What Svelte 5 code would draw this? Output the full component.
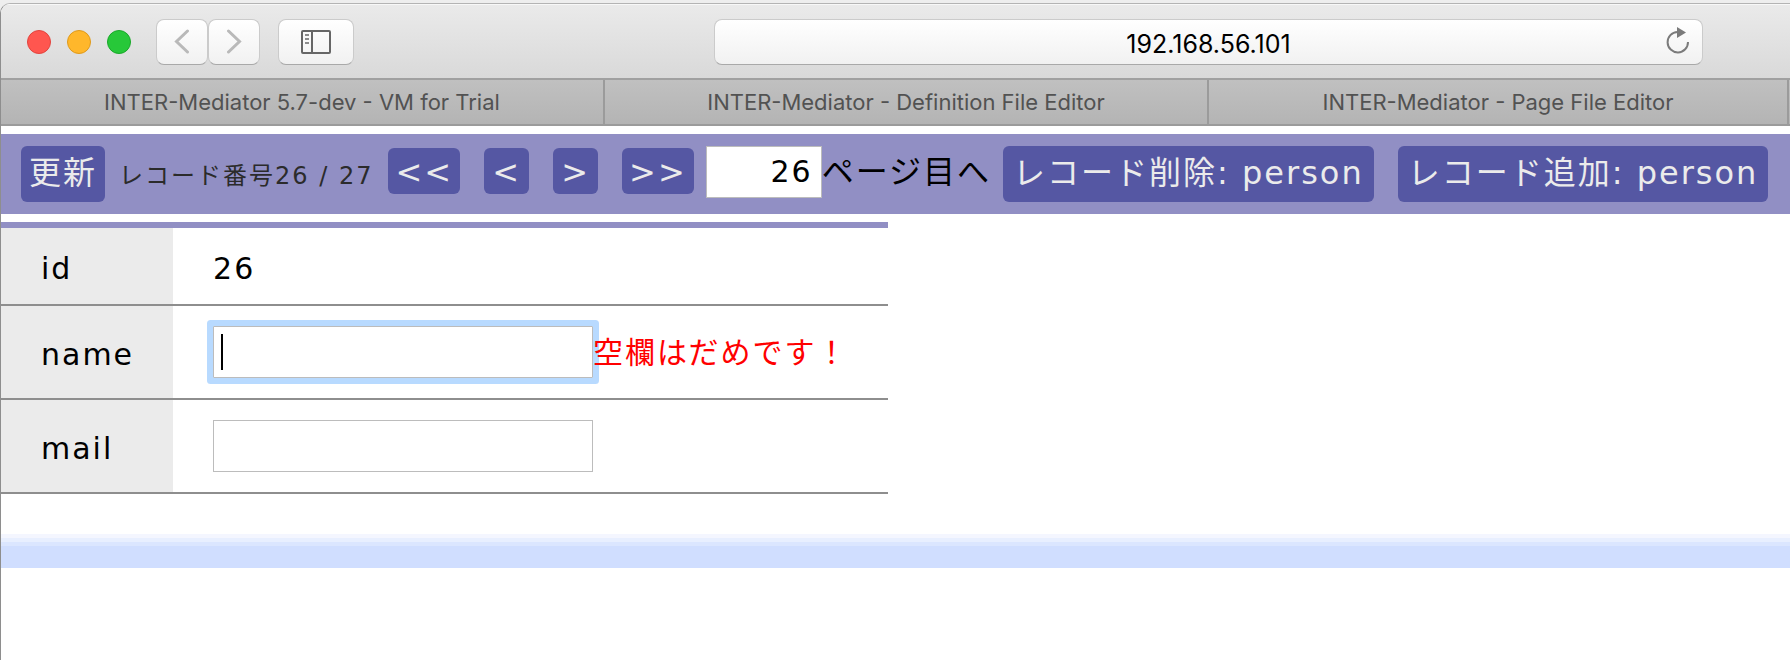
<script>
  const tabs = [
    'INTER-Mediator 5.7-dev - VM for Trial',
    'INTER-Mediator - Definition File Editor',
    'INTER-Mediator - Page File Editor'
  ];
  let page = $state('26');
  let name = $state('');
  let mail = $state('');
</script>

<div class="window">
  <header class="toolbar">
    <div class="lights">
      <span class="light red"></span>
      <span class="light amber"></span>
      <span class="light green"></span>
    </div>
    <div class="history">
      <button class="tool nav" aria-label="Back">
        <svg width="16" height="26" viewBox="0 0 16 26"><path d="M13.5 2 2.500 12.500 13.500 23" /></svg>
      </button>
      <button class="tool nav" aria-label="Forward">
        <svg width="16" height="26" viewBox="0 0 16 26"><path d="M2.500 2 13.500 12.500 2.500 23" /></svg>
      </button>
    </div>
    <button class="tool side" aria-label="Sidebar">
      <svg width="30" height="24" viewBox="0 0 30 24">
        <rect x="1" y="1" width="28" height="22" rx="1" fill="none" stroke="#666" stroke-width="2" />
        <path d="M11 1v22" stroke="#666" stroke-width="2" />
        <path d="M4 5h4M4 9h4M4 13h4" stroke="#8c8c8c" stroke-width="2" />
      </svg>
    </button>
    <div class="address">
      <span>192.168.56.101</span>
      <button class="reload" aria-label="Reload">
        <svg width="24" height="28" viewBox="0 0 24 28">
          <path d="M22 15A10.200 10.200 0 1 1 11.500 5" fill="none" stroke="#7b7b7b" stroke-width="2" />
          <path d="M11 0v11l9-5.500z" fill="#7b7b7b" />
        </svg>
      </button>
    </div>
  </header>

  <nav class="tabs">
    {#each tabs as tab}
      <a href="#top">{tab}</a>
    {/each}
  </nav>

  <main>
    <div class="navigator">
      <button class="action refresh">更新</button>
      <span class="count">レコード番号26 / 27</span>
      <div class="pager">
        <button class="action step">&lt;&lt;</button>
        <button class="action step">&lt;</button>
        <button class="action step">&gt;</button>
        <button class="action step">&gt;&gt;</button>
      </div>
      <label class="jump"><input bind:value={page} />ページ目へ</label>
      <div class="records">
        <button class="action">レコード削除: person</button>
        <button class="action">レコード追加: person</button>
      </div>
    </div>

    <table>
      <tbody>
        <tr class="short">
          <th scope="row">id</th>
          <td>26</td>
        </tr>
        <tr>
          <th scope="row"><label for="name">name</label></th>
          <td>
            <div class="field">
              <input id="name" class="focused" bind:value={name} />
              <span class="caret"></span>
              <span class="error">空欄はだめです！</span>
            </div>
          </td>
        </tr>
        <tr>
          <th scope="row"><label for="mail">mail</label></th>
          <td><div class="field"><input id="mail" bind:value={mail} /></div></td>
        </tr>
      </tbody>
    </table>

    <div class="band"></div>
  </main>
</div>

<style>
  :global(body) {
    background: #eee;
  }
  * {
    box-sizing: border-box;
  }
  button,
  input {
    font: inherit;
    letter-spacing: inherit;
    margin: 0;
  }
  .window {
    margin-top: 3px;
    min-height: calc(100vh - 3px);
    border-left: 1px solid #8e8e8e;
    border-top: 1px solid #b4b4b4;
    border-top-left-radius: 10px;
    background: #fff;
    overflow: hidden;
  }
  .toolbar {
    display: flex;
    align-items: center;
    height: 76px;
    padding: 1px 87px 0 26px;
    border-top: 1px solid #f8f8f8;
    border-bottom: 2px solid #a0a0a0;
    background: linear-gradient(#eaeaea, #d9d9d9);
  }
  .lights {
    display: flex;
    gap: 16px;
    margin-right: 25px;
  }
  .light {
    width: 24px;
    height: 24px;
    border-radius: 50%;
    border: 1px solid;
  }
  .red {
    background: #ff564f;
    border-color: #e2443e;
  }
  .amber {
    background: #ffb72b;
    border-color: #df9a1c;
  }
  .green {
    background: #27c839;
    border-color: #1aa82a;
  }
  .history {
    display: flex;
    margin-right: 18px;
  }
  .tool,
  .address {
    height: 46px;
    border: 1px solid #cbcbcb;
    border-bottom-color: #a9a9a9;
    border-radius: 8px;
    background: linear-gradient(#fff, #f1f1f1);
  }
  .tool {
    display: flex;
    align-items: center;
    justify-content: center;
    padding: 0;
  }
  .nav {
    width: 52px;
  }
  .nav path {
    fill: none;
    stroke: #b9b9b9;
    stroke-width: 3;
    stroke-linecap: round;
  }
  .side {
    width: 76px;
  }
  .address {
    position: relative;
    flex: 1;
    margin-left: 360px;
    padding-top: 3px;
    display: flex;
    align-items: center;
    justify-content: center;
    font: 25px/30px Inter, sans-serif;
    color: #000;
  }
  .reload {
    position: absolute;
    right: 12px;
    top: 7px;
    padding: 0;
    border: 0;
    background: none;
    line-height: 0;
  }
  .tabs {
    display: grid;
    grid-template-columns: 604fr 604fr 580fr;
    padding-right: 1px;
    height: 46px;
    border-bottom: 2px solid #9b9b9b;
    background: linear-gradient(#c0c0c0, #b4b4b4);
  }
  .tabs a {
    border-right: 2px solid #9b9b9b;
    text-align: center;
    text-decoration: none;
    color: #525252;
    font: 22px/44px Inter, sans-serif;
    white-space: nowrap;
  }
  main {
    padding-top: 8px;
    font-family: 'DejaVu Sans', 'Noto Sans CJK JP', sans-serif;
    font-size: 30px;
    letter-spacing: 2px;
    color: #000;
  }
  .navigator {
    display: flex;
    align-items: flex-start;
    height: 80px;
    padding: 12px 20px;
    background: #918fc4;
    white-space: nowrap;
  }
  .action {
    height: 56px;
    padding: 0 10px 2px;
    border: 0;
    border-radius: 6px;
    background: #5557a3;
    color: #ebebeb;
    font-size: 32px;
    line-height: 48px;
  }
  .refresh {
    padding: 0 8px 2px;
  }
  .count {
    margin: 0 15px 0 14px;
    font-size: 24px;
    line-height: 60px;
    color: #2b2b2b;
  }
  .pager,
  .records {
    display: flex;
    gap: 24px;
  }
  .step {
    height: 46px;
    min-width: 45px;
    margin-top: 2px;
    padding: 0 7px;
  }
  .jump {
    display: flex;
    margin: 0 12px;
    font-size: 32px;
    line-height: 52px;
  }
  input {
    height: 52px;
    border: 1px solid #bcbcbc;
    border-radius: 0;
    padding: 0 8px;
    background: #fff;
    outline: 0;
    color: #000;
  }
  .jump input {
    width: 116px;
    font-size: 30px;
    text-align: right;
  }
  table {
    margin-top: 8px;
    border-collapse: separate;
    border-spacing: 0;
    border-top: 6px solid #918fc4;
    white-space: nowrap;
  }
  th,
  td {
    height: 94px;
    padding: 4px 40px 0;
    border-bottom: 2px solid #8e8e8e;
    font-weight: 400;
    text-align: left;
    vertical-align: middle;
  }
  td:has(.field) {
    padding-top: 0;
  }
  .short th,
  .short td {
    height: 78px;
  }
  th {
    background: #ebebeb;
    padding-right: 39px;
  }
  .field {
    position: relative;
    display: flex;
    align-items: center;
  }
  .field input {
    width: 380px;
  }
  .focused {
    box-shadow: 0 0 0 6px #b8daff;
    border-radius: 1px;
    caret-color: transparent;
  }
  .caret {
    position: absolute;
    left: 8px;
    top: 8px;
    width: 2px;
    height: 36px;
    background: #000;
  }
  .error {
    position: relative;
    padding-bottom: 4px;
    color: #f00;
  }
  .band {
    height: 34px;
    margin-top: 40px;
    background: linear-gradient(#f4f6ff 4px, #e8efff 4px 8px, #dbe6ff 8px 12px, #d0deff 12px);
  }
</style>
